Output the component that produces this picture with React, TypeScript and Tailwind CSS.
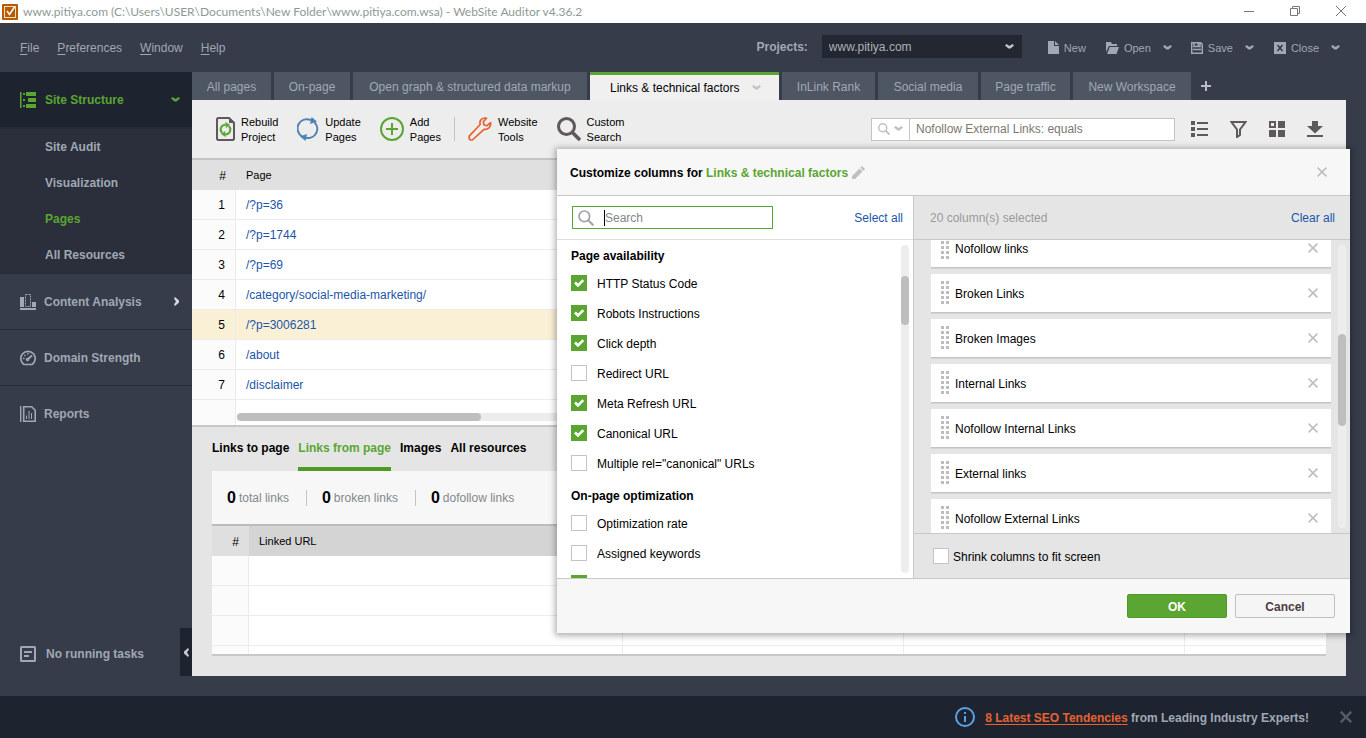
import React, { useState } from "react";
import clsx from "clsx";

type Tab = { name: string; width: string };

const tabs: Tab[] = [
  { name: "All pages", width: "w-[79px]" },
  { name: "On-page", width: "w-[76px]" },
  { name: "Open graph & structured data markup", width: "w-[234px]" },
  { name: "Links & technical factors", width: "w-[189px]" },
  { name: "InLink Rank", width: "w-[93px]" },
  { name: "Social media", width: "w-[100px]" },
  { name: "Page traffic", width: "w-[89px]" },
  { name: "New Workspace", width: "w-[118px]" },
];

const pages = [
  "/?p=36",
  "/?p=1744",
  "/?p=69",
  "/category/social-media-marketing/",
  "/?p=3006281",
  "/about",
  "/disclaimer",
];

const columnGroups = [
  {
    title: "Page availability",
    columns: [
      "HTTP Status Code",
      "Robots Instructions",
      "Click depth",
      "Redirect URL",
      "Meta Refresh URL",
      "Canonical URL",
      'Multiple rel="canonical" URLs',
    ],
  },
  {
    title: "On-page optimization",
    columns: ["Optimization rate", "Assigned keywords"],
  },
];

const checkedColumns = ["HTTP Status Code", "Robots Instructions", "Click depth", "Meta Refresh URL", "Canonical URL"];

const selectedColumns = [
  "Nofollow links",
  "Broken Links",
  "Broken Images",
  "Internal Links",
  "Nofollow Internal Links",
  "External links",
  "Nofollow External Links",
];

const Chevron = ({ className }: { className?: string }) => (
  <svg width="9" height="6" viewBox="0 0 9 6" className={className}>
    <path d="M0 1.500L1.500 0l3 2 3-2L9 1.500 5.500 4.500h-2z" fill="currentColor" />
  </svg>
);

const Cross = ({ size = 10, weight = 1.5 }: { size?: number; weight?: number }) => (
  <svg width={size} height={size} viewBox="0 0 10 10">
    <path d="M.6.6l8.8 8.8M9.4.6L.6 9.4" stroke="currentColor" strokeWidth={weight} fill="none" />
  </svg>
);

const Magnifier = ({ size, weight = 2 }: { size: number; weight?: number }) => (
  <svg width={size} height={size} viewBox="0 0 24 24" fill="none" stroke="currentColor">
    <circle cx="9.5" cy="9.5" r="8" strokeWidth={weight} />
    <path d="M15 15l8 8" strokeWidth={weight + 0.6} />
  </svg>
);

const TitleBar = () => (
  <div className="flex h-[23px] items-center bg-white pl-[2px] text-[#8e9a94]">
    <svg width="16" height="16" viewBox="0 0 16 16" className="mr-[5px]">
      <rect width="16" height="16" rx="1" fill="#b85c00" />
      <rect x="2.5" y="2.5" width="11" height="11" fill="none" stroke="#f6dcc0" />
      <path d="M5 7l2.500 3.500L12.500 3" fill="none" stroke="#fff" strokeWidth="1.500" />
    </svg>
    <h1 className="flex-1 font-[Lato,sans-serif] text-[12px] leading-4 whitespace-nowrap">
      www.pitiya.com (C:\Users\USER\Documents\New Folder\www.pitiya.com.wsa) - WebSite Auditor v4.36.2
    </h1>
    <div className="flex items-center gap-[34px] pr-[19px] pb-[2px] text-[#777]">
      <button aria-label="Minimize">
        <svg width="12" height="12" viewBox="0 0 12 12" className="block">
          <path d="M1 6.500h10" stroke="currentColor" />
        </svg>
      </button>
      <button aria-label="Restore">
        <svg width="12" height="12" viewBox="0 0 12 12" fill="none" stroke="currentColor" className="block">
          <path d="M1.500 3.500h7v7h-7zM3.500 3.500v-2h7v7h-2" />
        </svg>
      </button>
      <button aria-label="Close window">
        <svg width="12" height="12" viewBox="0 0 12 12" className="block">
          <path d="M1 1l10 10M11 1L1 11" stroke="currentColor" />
        </svg>
      </button>
    </div>
  </div>
);

const MenuBar = () => (
  <header className="flex h-[49px] items-center pr-[26px] pl-5 text-[12px] text-[#a0a8b4]">
    <nav className="flex flex-1 gap-[18px]">
      {["File", "Preferences", "Window", "Help"].map((item) => (
        <button key={item}>
          <span className="underline underline-offset-2">{item[0]}</span>
          {item.slice(1)}
        </button>
      ))}
    </nav>
    <label htmlFor="project" className="mr-[14px] -mt-[2px] font-bold">
      Projects:
    </label>
    <div className="relative -mt-[2px]">
      <select
        id="project"
        className="block h-[23px] w-[200px] appearance-none bg-[#222731] pl-[7px] text-[#aab1bb] outline-none"
      >
        <option>www.pitiya.com</option>
      </select>
      <Chevron className="pointer-events-none absolute top-[9px] right-[8px] text-[#c4c8ce]" />
    </div>
    <div className="flex items-center pl-[26px] text-[11px] text-[#a0a8b4]">
      <button className="flex items-center gap-[5px]">
        <svg width="11" height="13" viewBox="0 0 11 13" fill="currentColor">
          <path d="M0 0h6v5h5v8H0zM7 0l4 4H7z" />
        </svg>
        <span className="pt-px">New</span>
      </button>
      <button className="ml-[20px] flex items-center gap-[5px]">
        <svg width="13" height="12" viewBox="0 0 13 12" fill="currentColor">
          <path d="M0 0h5l1 2h5v2H3L0 10zM3.800 5H13l-2.500 7H1z" />
        </svg>
        <span className="pt-px">Open</span>
        <Chevron className="ml-[7px]" />
      </button>
      <button className="ml-[19px] flex items-center gap-[5px]">
        <svg width="12" height="12" viewBox="0 0 12 12" fill="none" stroke="currentColor" strokeWidth="1.500">
          <path d="M.7.700h9l1.600 1.600v9H.7zM3 1v3.500h6V1M2 7.500h8" />
          <path d="M7.300 1v3" />
        </svg>
        <span className="pt-px">Save</span>
        <Chevron className="ml-[7px]" />
      </button>
      <button className="ml-[20px] flex items-center gap-[5px]">
        <svg width="12" height="12" viewBox="0 0 12 12">
          <rect width="12" height="12" fill="currentColor" />
          <path d="M3.500 3l5 6M8.500 3l-5 6" stroke="#363b48" strokeWidth="1.600" />
        </svg>
        <span className="pt-px">Close</span>
        <Chevron className="ml-[7px]" />
      </button>
    </div>
  </header>
);

const Sidebar = () => (
  <aside className="flex w-48 shrink-0 flex-col text-[12px] font-bold text-[#a0a8b4]">
    <button className="flex h-[55px] items-center bg-[#1e242f] pr-3 pl-5 text-[#5ba532]">
      <svg width="16" height="16" viewBox="0 0 16 16" fill="currentColor" className="mr-2">
        <path d="M0 0h1.500v16H0zM3 1h2v2H3zM3 7h2v2H3zM3 13h2v2H3zM6 0h10v4H6zM8 6h8v4H8zM6 12h10v4H6z" />
      </svg>
      <span className="flex-1 pt-px pl-px text-left">Site Structure</span>
      <Chevron />
    </button>
    <nav className="flex flex-col border-t-2 border-b border-[#262a35] bg-[#2a2f3b]">
      {["Site Audit", "Visualization", "Pages", "All Resources"].map((item) => (
        <a key={item} href="#" className={clsx("flex h-9 items-center pl-[45px]", item === "Pages" && "text-[#5ba532]")}>
          {item}
        </a>
      ))}
    </nav>
    <a href="#" className="flex h-14 items-center border-b border-[#272c37] pr-3 pl-5">
      <svg width="16" height="16" viewBox="0 0 16 16" fill="currentColor" className="mr-2">
        <path d="M0 3h4v10H0zM12 8h4v5h-4zM0 14h16v2H0z" />
        <path d="M5.500.500h5v12h-5z" fill="none" stroke="currentColor" strokeDasharray="2 1" />
      </svg>
      <span className="flex-1">Content Analysis</span>
      <svg width="6" height="9" viewBox="0 0 6 9">
        <path d="M1 0L5 3.500v2L1 9 0 7.500l2-3-2-3z" fill="#d4d7db" />
      </svg>
    </a>
    <a href="#" className="flex h-14 items-center border-b border-[#272c37] pl-5">
      <svg width="16" height="16" viewBox="0 0 16 16" fill="none" stroke="currentColor" className="mr-2">
        <path d="M4 14.500a7.200 7.200 0 1 1 8 0z" strokeWidth="1.700" />
        <path d="M7.500 9.500L12 5.500" strokeWidth="2" />
        <circle cx="7.500" cy="9.500" r="1" strokeWidth="1.500" />
        <path d="M3 8.500h1.500M4.500 5l1 1M8 3v1.500" strokeWidth="1.400" />
      </svg>
      Domain Strength
    </a>
    <a href="#" className="flex h-14 items-center pl-5">
      <svg width="16" height="16" viewBox="0 0 16 16" fill="none" stroke="currentColor" className="mr-2">
        <path d="M.7 0v16" strokeWidth="1.400" />
        <path d="M3.700.800h8l3.500 3.500v10.900H3.700z" strokeWidth="1.600" />
        <path d="M6.500 13V9.500M9 13V5M11.500 13V7" />
      </svg>
      Reports
    </a>
    <div className="mt-auto flex items-center pl-5">
      <div className="flex flex-1 items-center gap-[10px] pt-1">
        <svg width="16" height="16" viewBox="0 0 16 16" fill="none" stroke="currentColor">
          <rect x="1" y="1" width="14" height="14" rx=".5" strokeWidth="2" />
          <path d="M4 6h8M4 10h5" strokeWidth="1.800" />
        </svg>
        No running tasks
      </div>
      <button aria-label="Collapse sidebar" className="flex h-12 w-3 items-center justify-center bg-[#1e242f]">
        <svg width="5" height="9" viewBox="0 0 5 9">
          <path d="M4 0L0 3.500v2L4 9l1-1.500-2-3 2-3z" fill="#c4c8ce" />
        </svg>
      </button>
    </div>
  </aside>
);

const WorkspaceTabs = () => (
  <div className="flex h-7 gap-[3px] bg-[#363c49] text-[12px] text-[#a0a8b4]">
    {tabs.map((tab) => {
      const active = tab.name === "Links & technical factors";
      return (
        <button
          key={tab.name}
          className={clsx(
            "flex items-center whitespace-nowrap",
            tab.width,
            active
              ? "gap-[13px] border-t-[3px] border-[#5ba532] bg-[#f0f0f0] pl-5 text-black"
              : "justify-center bg-[#4f5663] pt-[2px]"
          )}
        >
          {tab.name}
          {active && <Chevron className="text-[#c4c4c4]" />}
        </button>
      );
    })}
    <button aria-label="Add workspace" className="pl-[7px]">
      <svg width="10" height="10" viewBox="0 0 10 10">
        <path d="M5 0v10M0 5h10" stroke="#b9bec6" strokeWidth="2" />
      </svg>
    </button>
  </div>
);

const ToolButton = ({ lines, children }: { lines: [string, string]; children: React.ReactNode }) => (
  <button className="flex items-center gap-[6px] text-left text-[11px] leading-[15px] text-black">
    {children}
    <span className="pt-[2px]">
      {lines[0]}
      <br />
      {lines[1]}
    </span>
  </button>
);

const Toolbar = () => (
  <div className="flex h-[60px] items-center border-b-2 border-[#c4c4c4] bg-[#ededed] pr-[23px] pl-6">
    <div className="flex flex-1 items-center gap-[19px]">
      <ToolButton lines={["Rebuild", "Project"]}>
        <svg width="19" height="24" viewBox="0 0 19 24" fill="none">
          <path d="M2 1h11l5 5v16l-1 1H2l-1-1V2z" stroke="#5f595b" strokeWidth="2" />
          <path d="M13 0l6 6h-6z" fill="#5f595b" />
          <path d="M6.200 16A4.800 4.800 0 0 1 9.500 7.700M12.800 9A4.800 4.800 0 0 1 9.500 17.300" stroke="#5ba532" strokeWidth="2" />
          <path d="M9 5l5 2.800L10 11zM10 20l-5-2.800L9 14z" fill="#5ba532" />
        </svg>
      </ToolButton>
      <ToolButton lines={["Update", "Pages"]}>
        <svg width="22" height="24" viewBox="0 0 22 24" fill="none" stroke="#4f82b3" strokeWidth="2">
          <path d="M5.600 19.800A9.200 9.200 0 0 1 14 3.200M17.400 5.200A9.200 9.200 0 0 1 9 20.800" />
          <path d="M14.500 0l5.500 4.500-7 2.500zM8.500 24L3 19.500l7-2.500z" fill="#4f82b3" stroke="none" />
        </svg>
      </ToolButton>
      <ToolButton lines={["Add", "Pages"]}>
        <svg width="24" height="24" viewBox="0 0 24 24" fill="none" stroke="#5ba532" strokeWidth="2">
          <circle cx="12" cy="12" r="11" />
          <path d="M12 6v12M6 12h12" />
        </svg>
      </ToolButton>
      <span className="-mx-[6px] h-6 w-px bg-[#c4c4c4]" />
      <ToolButton lines={["Website", "Tools"]}>
        <svg width="24" height="24" viewBox="0 0 24 24" fill="none" stroke="#e8622f" strokeWidth="1.700" strokeLinejoin="round">
          <path d="M18.500 1.200c-4-1-7.500 2.300-6.300 6.300L1.200 19.200v2.600l1.200 1.200h2L16 12.300c4 .800 7.500-2.800 6.500-6.600l-3.300 3-3.200-.7-.7-3.200z" />
        </svg>
      </ToolButton>
      <ToolButton lines={["Custom", "Search"]}>
        <span className="text-[#5f595b]">
          <Magnifier size={24} weight={3} />
        </span>
      </ToolButton>
    </div>
    <div className="flex h-[23px] w-[304px] border border-[#c4c4c4] bg-white">
      <button aria-label="Search options" className="flex w-[38px] items-center justify-center gap-1 border-r border-[#c4c4c4] text-[#c0c0c0]">
        <Magnifier size={12} weight={3} />
        <Chevron />
      </button>
      <input
        aria-label="Filter pages"
        defaultValue="Nofollow External Links: equals"
        className="min-w-0 flex-1 px-[6px] text-[12px] text-[#7d7872] outline-none"
      />
    </div>
    <div className="ml-4 flex gap-[22px] text-[#5f595b]">
      <button aria-label="Rows">
        <svg width="17" height="16" viewBox="0 0 17 16" fill="currentColor">
          <path d="M0 0h4v4H0zM0 6h4v4H0zM0 12h4v4H0zM6 1h11v2H6zM6 7h11v2H6zM6 13h11v2H6z" />
        </svg>
      </button>
      <button aria-label="Filter">
        <svg width="17" height="17" viewBox="0 0 17 17" fill="none" stroke="currentColor" strokeWidth="2">
          <path d="M1.500 1h14L10 8.500V14l-3 2V8.500z" />
        </svg>
      </button>
      <button aria-label="Columns">
        <svg width="16" height="16" viewBox="0 0 16 16" fill="currentColor">
          <path d="M0 0h7v7H0zM2 2v3h3V2z" fillRule="evenodd" />
          <path d="M9 0h7v7H9zM0 9h7v7H0zM9 9h7v7H9z" />
        </svg>
      </button>
      <button aria-label="Download">
        <svg width="16" height="16" viewBox="0 0 16 16" fill="currentColor">
          <path d="M5 0h6v5h5l-8 7.500L0 5h5zM0 14h16v2H0z" />
        </svg>
      </button>
    </div>
  </div>
);

const PagesTable = () => (
  <div className="border-b-2 border-[#c8c8c8] bg-white">
    <table className="w-full table-fixed border-separate border-spacing-0 text-[12px]">
      <thead>
        <tr className="h-[30px] bg-[#e0e0e0] text-left">
          <th className="w-11 pt-px pr-[10px] text-right font-normal">#</th>
          <th className="pt-px pl-[10px] text-[11px] font-normal">Page</th>
        </tr>
      </thead>
      <tbody>
        {pages.map((page, i) => (
          <tr key={page} className={clsx("h-[30px]", i === 4 && "bg-[#f9f0d6]")}>
            <td className={clsx("border-r border-b border-[#ececec] pr-[10px] text-right", i !== 4 && "bg-[#fbfbfb]")}>
              {i + 1}
            </td>
            <td className="border-b border-[#ececec] pl-[10px]">
              <a href="#" className="text-[#1c55a8]">
                {page}
              </a>
            </td>
          </tr>
        ))}
      </tbody>
    </table>
    <div className="flex h-[25px] items-center">
      <div className="h-full w-11 border-r border-[#ececec] bg-[#fbfbfb]" />
      <div className="ml-px mt-2 h-2 flex-1 rounded-full bg-[#ececec]">
        <div className="h-full w-[22%] rounded-full bg-[#bebebe]" />
      </div>
    </div>
  </div>
);

const LinksPanel = () => (
  <section className="flex min-h-0 flex-1 flex-col bg-[#e5e5e5] px-5 pb-5">
    <div className="flex h-11 gap-[9px] text-[12px] font-bold">
      {["Links to page", "Links from page", "Images", "All resources"].map((item) => (
        <button
          key={item}
          className={clsx("border-b-4 pt-[2px]", item === "Links from page" ? "border-[#4f9a22] text-[#5ba532]" : "border-transparent")}
        >
          {item}
        </button>
      ))}
    </div>
    <div className="flex min-h-0 flex-1 flex-col overflow-hidden border-b-2 border-[#c8c8c8] bg-white">
      <div className="flex h-[55px] shrink-0 items-center border-b-2 border-[#bcbcbc] bg-[#f7f7f7] pl-[15px] text-[12px] text-[#83888c]">
        {["total links", "broken links", "dofollow links"].map((label, i) => (
          <div key={label} className={clsx("flex h-4 items-center gap-[3px] pr-[17px]", i > 0 && "border-l border-[#c4c4c4] pl-[15px]")}>
            <b className="text-[16px] text-black">0</b>
            {label}
          </div>
        ))}
      </div>
      <table className="w-full table-fixed border-separate border-spacing-0 text-[11px]">
        <thead>
          <tr className="h-[30px] bg-[#d4d4d4] text-left">
            <th className="w-[37px] bg-[#dfdfdf] pt-px pr-[10px] text-right text-[12px] font-normal">#</th>
            <th className="w-[374px] pt-px pl-[10px] font-normal">Linked URL</th>
            <th className="w-[281px]" />
            <th className="w-[281px]" />
            <th />
          </tr>
        </thead>
        <tbody>
          {[1, 2, 3, 4].map((row) => (
            <tr key={row} className="h-[30px]">
              <td className="border-r border-b border-[#ececec] bg-[#fbfbfb]" />
              <td className="border-r border-b border-[#ececec]" />
              <td className="border-r border-b border-[#ececec]" />
              <td className="border-r border-b border-[#ececec]" />
              <td className="border-b border-[#ececec]" />
            </tr>
          ))}
        </tbody>
      </table>
    </div>
  </section>
);

const Checkbox = ({ label, defaultChecked, gap }: { label?: string; defaultChecked?: boolean; gap: string }) => (
  <label className={clsx("flex h-[30px] items-center", gap)}>
    <span className="relative h-4 w-4">
      <input
        type="checkbox"
        defaultChecked={defaultChecked}
        className="peer block h-4 w-4 appearance-none border border-[#c4c4c4] bg-white checked:border-[#5ba532] checked:bg-[#5ba532]"
      />
      <svg width="16" height="16" viewBox="0 0 16 16" className="pointer-events-none absolute inset-0 hidden peer-checked:block">
        <path d="M4 7.500l3 3L12.300 5.200" fill="none" stroke="#fff" strokeWidth="2.600" />
      </svg>
    </span>
    <span className="pt-px">{label}</span>
  </label>
);

const Grip = () => (
  <svg width="8" height="24" viewBox="0 0 8 24" fill="#bdbdbd">
    {[0, 5, 10, 15, 20].map((y) => (
      <path key={y} d={`M0 ${y}h3v3H0zM5 ${y}h3v3H5z`} />
    ))}
  </svg>
);

const CustomizeDialog = () => {
  const [selected, setSelected] = useState(selectedColumns);

  return (
    <div
      role="dialog"
      aria-label="Customize columns"
      className="absolute top-[149px] right-4 bottom-[105px] left-[557px] flex flex-col bg-[#f7f7f7] text-[12px] text-black shadow-[0_1px_6px_2px_rgba(0,0,0,0.3)]"
    >
      <div className="flex h-[47px] items-center border-b border-[#c8c8c8] pr-[23px] pl-[13px]">
        <h2 className="pt-px font-bold">
          Customize columns for <span className="text-[#5ba532]">Links & technical factors</span>
        </h2>
        <button aria-label="Rename" className="ml-1 flex-1 text-[#c0c0c0]">
          <svg width="13" height="13" viewBox="0 0 13 13" fill="currentColor">
            <path d="M0 10l7.500-7.500 3 3L3 13H0zM8.300 1.700L10 0l3 3-1.700 1.700z" />
          </svg>
        </button>
        <button aria-label="Close" className="text-[#bdbdbd]">
          <Cross />
        </button>
      </div>

      <div className="flex min-h-0 flex-1">
        <div className="flex w-[357px] flex-col border-r border-[#c8c8c8] bg-white">
          <div className="flex h-11 items-center justify-between border-b border-[#dedede] pr-[10px] pl-[15px]">
            <div className="flex h-[23px] w-[201px] items-center border border-[#5ba532] pl-[5px] text-[#a0a4a8]">
              <Magnifier size={16} weight={2.600} />
              <span className="ml-[10px] h-4 w-px bg-black" />
              <input
                aria-label="Search columns"
                placeholder="Search"
                className="min-w-0 flex-1 text-black outline-none placeholder:text-[#83888c]"
              />
            </div>
            <button className="text-[#1c55a8]">Select all</button>
          </div>
          <div className="flex min-h-0 flex-1 justify-between">
            <div className="overflow-hidden pl-[14px]">
              <div className="-mt-[2px]">
                {columnGroups.map((group) => (
                  <div key={group.title}>
                    <h3 className="h-[30px] pt-[3px] leading-[30px] font-bold">{group.title}</h3>
                    {group.columns.map((column) => (
                      <Checkbox key={column} label={column} defaultChecked={checkedColumns.includes(column)} gap="gap-[10px]" />
                    ))}
                  </div>
                ))}
                <Checkbox defaultChecked gap="gap-[10px]" />
              </div>
            </div>
            <div className="my-[5px] mr-1 w-2 rounded-full bg-[#ededed] pt-[31px]">
              <div className="h-[49px] rounded-full bg-[#bebebe]" />
            </div>
          </div>
        </div>

        <div className="flex flex-1 flex-col bg-[#e5e5e5]">
          <div className="flex h-11 shrink-0 items-center justify-between border-b border-[#c8c8c8] pr-[15px] pl-4">
            <span className="text-[#9a9a9a]">20 column(s) selected</span>
            <button className="text-[#1c55a8]" onClick={() => setSelected([])}>
              Clear all
            </button>
          </div>
          <div className="flex min-h-0 flex-1">
            <div className="flex-1 overflow-hidden pl-[17px]">
              <ul className="-mt-[11px] flex flex-col gap-[6px]">
                {selected.map((column) => (
                  <li key={column} className="flex h-[39px] items-center border-b border-[#c4c4c4] bg-white pr-[13px] pl-[10px] shadow-[0_1px_0_#d4d4d4]">
                    <Grip />
                    <span className="flex-1 pt-px pl-[6px]">{column}</span>
                    <button
                      aria-label={`Remove ${column}`}
                      className="text-[#bdbdbd]"
                      onClick={() => setSelected(selected.filter((c) => c !== column))}
                    >
                      <Cross />
                    </button>
                  </li>
                ))}
              </ul>
            </div>
            <div className="my-[5px] mr-1 ml-[7px] w-2 rounded-full bg-[#ededed] pt-[89px]">
              <div className="h-[92px] rounded-full bg-[#bebebe]" />
            </div>
          </div>
          <div className="flex h-[45px] shrink-0 items-center border-t border-[#c8c8c8] pl-[19px]">
            <Checkbox label="Shrink columns to fit screen" gap="gap-1" />
          </div>
        </div>
      </div>

      <div className="flex h-[55px] items-center justify-end gap-2 border-t border-[#c8c8c8] pr-[15px] font-bold">
        <button className="h-6 w-[100px] rounded-[2px] border border-[#4f9a22] bg-[#5ba532] pt-px text-white">OK</button>
        <button className="h-6 w-[100px] rounded-[2px] border border-[#c0c0c0] bg-[#f5f5f5] pt-px text-[#4a3d3f]">Cancel</button>
      </div>
    </div>
  );
};

const NewsBar = () => (
  <footer className="flex h-[42px] shrink-0 items-center justify-end bg-[#1e242f] pr-[14px] text-[12px] font-bold text-[#a0a8b4]">
    <svg width="20" height="20" viewBox="0 0 20 20" className="mr-[10px]">
      <circle cx="10" cy="10" r="9" fill="none" stroke="#5aa2e6" strokeWidth="2" />
      <path d="M9 5h2v2H9zM9 9h2v6H9z" fill="#5aa2e6" />
    </svg>
    <p className="pt-px">
      <a href="#" className="text-[#e8622f] underline underline-offset-2">
        8 Latest SEO Tendencies
      </a>{" "}
      from Leading Industry Experts!
    </p>
    <button aria-label="Dismiss" className="ml-[31px] text-[#555c69]">
      <Cross size={12} weight={2} />
    </button>
  </footer>
);

const App = () => {
  return (
    <div className="relative flex h-screen flex-col bg-[#363c49] font-['Liberation_Sans',Arial,sans-serif]">
      <TitleBar />
      <MenuBar />
      <div className="flex min-h-0 flex-1 pr-5 pb-5">
        <Sidebar />
        <main className="flex min-w-0 flex-1 flex-col">
          <WorkspaceTabs />
          <Toolbar />
          <PagesTable />
          <LinksPanel />
        </main>
      </div>
      <NewsBar />
      <CustomizeDialog />
    </div>
  );
};

export default App;
